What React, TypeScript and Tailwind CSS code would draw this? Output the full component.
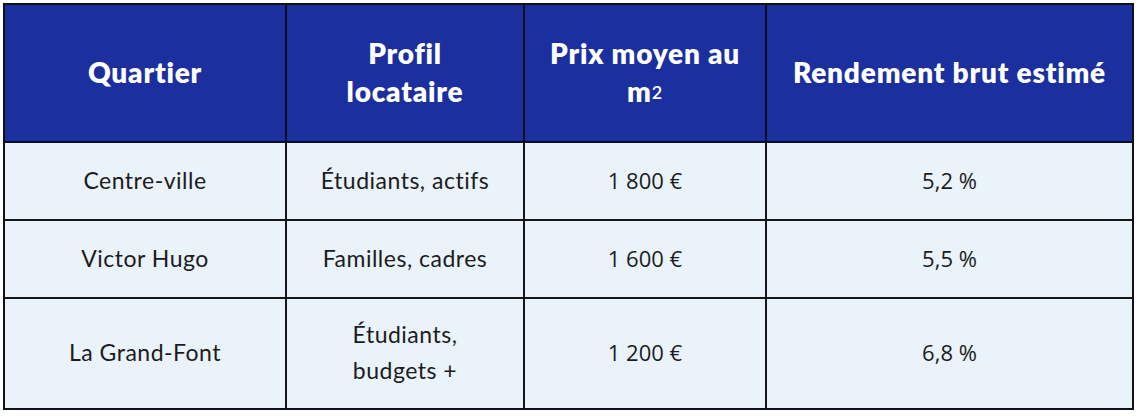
const rows = [
  { quartier: 'Centre-ville', profil: ['Étudiants, actifs'], prix: '1 800 €', rendement: '5,2 %' },
  { quartier: 'Victor Hugo', profil: ['Familles, cadres'], prix: '1 600 €', rendement: '5,5 %' },
  { quartier: 'La Grand-Font', profil: ['Étudiants,', 'budgets +'], prix: '1 200 €', rendement: '6,8 %' },
];

function HeadCell({ children, last }: { children: React.ReactNode; last?: boolean }) {
  return (
    <div
      className={`flex items-center justify-center text-center bg-[#1b2f9e] text-white font-extrabold text-[28px] tracking-[0.8px] leading-[38px] border-b-2 border-[#0b0d24] px-2 ${
        last ? '' : 'border-r-2'
      }`}
    >
      <div className="-mt-[3px]">{children}</div>
    </div>
  );
}

function Cell({
  children,
  last,
  bottom,
}: {
  children: React.ReactNode;
  last?: boolean;
  bottom?: boolean;
}) {
  return (
    <div
      className={`flex items-center justify-center text-center bg-[#eaf2fa] text-[#1c1c1c] text-[23px] tracking-[0.5px] leading-[36px] border-[#161616] px-3 ${
        last ? '' : 'border-r-2'
      } ${bottom ? '' : 'border-b-2'}`}
    >
      <div className="-mt-[3px]">{children}</div>
    </div>
  );
}

export default function App() {
  return (
    <div
      className="w-[1140px] h-[416px] bg-white pt-[3px] pl-[3px] [font-variant-ligatures:none]"
      style={{ fontFamily: 'Lato, "Noto Sans", sans-serif' }}
    >
      <div className="grid grid-cols-[282px_238px_242px_365px] grid-rows-[138px_78px_78px_109px] w-[1131px] border-2 border-[#111218]">
        <HeadCell>Quartier</HeadCell>
        <HeadCell>
          Profil
          <br />
          locataire
        </HeadCell>
        <HeadCell>
          Prix moyen au
          <br />
          m<sup className="text-[18px] font-semibold relative -top-[3px]">2</sup>
        </HeadCell>
        <HeadCell last>Rendement brut estimé</HeadCell>

        {rows.map((r, i) => {
          const bottom = i === rows.length - 1;
          return [
            <Cell key={`q${i}`} bottom={bottom}>
              {r.quartier}
            </Cell>,
            <Cell key={`p${i}`} bottom={bottom}>
              {r.profil.map((l) => (
                <div key={l}>{l}</div>
              ))}
            </Cell>,
            <Cell key={`x${i}`} bottom={bottom}>
              <span style={{ fontFamily: '"Open Sans", "Noto Sans", sans-serif' }} className="text-[22px] tracking-normal">
                {r.prix}
              </span>
            </Cell>,
            <Cell key={`r${i}`} bottom={bottom} last>
              <span style={{ fontFamily: '"Open Sans", "Noto Sans", sans-serif' }} className="text-[22px] tracking-normal">
                {r.rendement}
              </span>
            </Cell>,
          ];
        })}
      </div>
    </div>
  );
}
